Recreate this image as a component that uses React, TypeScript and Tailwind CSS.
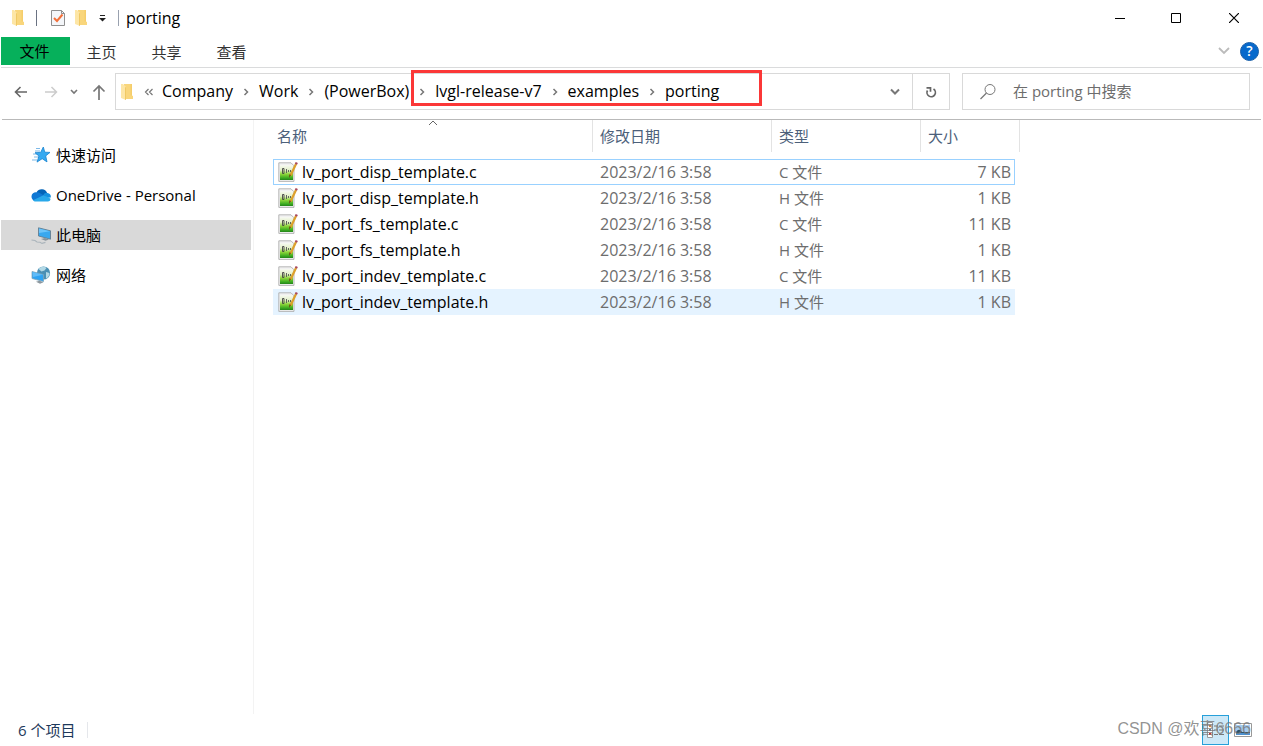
import { Fragment } from 'react';
import type { ReactNode } from 'react';
import clsx from 'clsx';

interface FileItem {
  name: string;
  date: string;
  type: string;
  size: string;
}

const files: FileItem[] = [
  { name: 'lv_port_disp_template.c', date: '2023/2/16 3:58', type: 'C 文件', size: '7 KB' },
  { name: 'lv_port_disp_template.h', date: '2023/2/16 3:58', type: 'H 文件', size: '1 KB' },
  { name: 'lv_port_fs_template.c', date: '2023/2/16 3:58', type: 'C 文件', size: '11 KB' },
  { name: 'lv_port_fs_template.h', date: '2023/2/16 3:58', type: 'H 文件', size: '1 KB' },
  { name: 'lv_port_indev_template.c', date: '2023/2/16 3:58', type: 'C 文件', size: '11 KB' },
  { name: 'lv_port_indev_template.h', date: '2023/2/16 3:58', type: 'H 文件', size: '1 KB' },
];

const FolderIcon = () => (
  <svg width="14" height="18" viewBox="0 0 14 18" className="shrink-0">
    <path d="M3 1h8v11.500l1 .5v3H3z" fill="#f9d67c" />
    <path d="M9.500 1H11v11.500H9.500z" fill="#f5cd6b" />
    <path d="M0 1h2l3 3v13l-5-2z" fill="#fde6a6" />
    <path d="M4 4l1 .5V17l-1-.5z" fill="#f0c965" />
  </svg>
);

const CheckDocIcon = () => (
  <svg width="14" height="18" viewBox="0 0 14 18" className="shrink-0">
    <path d="M.5 1.500h10l3 3v12H.5z" fill="#f4f6f9" stroke="#8f8f8f" />
    <path d="M10.500 1.500v3h3" fill="none" stroke="#8f8f8f" />
    <path d="M3 9l3 3 5.500-6.500" fill="none" stroke="#f2703a" strokeWidth="2" />
  </svg>
);

const StarIcon = () => (
  <svg width="20" height="18" viewBox="0 0 20 18">
    <path d="M4 5h5M2 8h5M3 11h5M1 14h5M5 2.500h4" stroke="#7db9e8" strokeWidth="1" />
    <path
      d="M12.300 1l1.500 5.200 5.200.2-4.300 3.500 1.300 6-4.800-3.200-5.200 3.400 2-6L4 6.700l5.700-.3z"
      fill="#36a9f0"
      stroke="#1583d0"
      strokeWidth=".8"
    />
  </svg>
);

const CloudIcon = () => (
  <svg width="20" height="14" viewBox="0 0 20 14">
    <path d="M5.500 4.300A6 6 0 0 1 16.200 5L10 9z" fill="#0364b8" />
    <path d="M4.500 13A4.300 4.300 0 0 1 5.200 4.300c1.500-.2 2.700.2 4 1l5 3L6 12z" fill="#0f78d4" />
    <path d="M12.500 6.500c1.200-1.600 2.600-1.800 4-1.400a4 4 0 0 1 3.300 4.400L14 10z" fill="#1490df" />
    <path d="M2 12.200l10-4.700c2 .5 5 1 7.500 3.300.2 1.500-1 2.700-2.700 2.700H4.500c-1 0-1.900-.4-2.500-1.300z" fill="#28a8ea" />
  </svg>
);

const ComputerIcon = () => (
  <svg width="20" height="18" viewBox="0 0 20 18">
    <path d="M7.500 1.800l12 3v8.400l-12-3.200z" fill="#39a8ef" stroke="#5f7686" strokeWidth=".8" />
    <path d="M8 2.400l11 2.800L8 7z" fill="#6cc4fa" />
    <path d="M10 13l4-1 4 1.500-3.500 1.300z" fill="#87939b" />
    <path d="M.5 14l3.500.5 2 1.500 3 .2 2 1.200 3.500-1" fill="none" stroke="#aab4bb" strokeWidth="1.100" />
  </svg>
);

const NetworkIcon = () => (
  <svg width="20" height="18" viewBox="0 0 20 18">
    <circle cx="12.500" cy="7" r="6.600" fill="#4a8fb4" />
    <path d="M7.500 3c2-2.500 6-3 8-1l-2 2.500-3 1zM15 6l3.500 1c0 3-1.500 4.500-3.500 5.500z" fill="#b3d9e6" />
    <path d="M1 5.500l11.500 3v7L1 12.500z" fill="#2ea3f2" stroke="#7da3b8" strokeWidth=".8" />
    <path d="M1.500 6l10.500 2.800L2 11z" fill="#5fbcf9" />
    <path d="M5 15.800l3.500-1 4 1.500-3.500 1.500z" fill="#8c979e" />
  </svg>
);

const FileIcon = () => (
  <svg width="20" height="20" viewBox="0 0 20 20" className="shrink-0">
    <defs>
      <linearGradient id="pad" x1="0" y1="0" x2="0" y2="1">
        <stop offset="0" stopColor="#f7f9f3" />
        <stop offset=".35" stopColor="#e2f0c6" />
        <stop offset=".6" stopColor="#8fd63c" />
        <stop offset=".85" stopColor="#3fae22" />
        <stop offset="1" stopColor="#23831a" />
      </linearGradient>
    </defs>
    <path d="M.8.800h12.200l3 3v15.600H.8z" fill="#f1f1f1" stroke="#a6a6a6" strokeWidth=".8" />
    <path d="M2 3h13v15H2z" fill="url(#pad)" />
    <path d="M4.500 6.500h1.500v5H4.500z" fill="none" stroke="#444" strokeWidth=".9" />
    <path d="M8.500 7v4M10.500 8v2M12.500 8v2" stroke="#555" strokeWidth=".9" />
    <path d="M18 2L12.500 13.500" stroke="#dda02c" strokeWidth="2.200" />
    <path d="M18.800.5l-.9 1.800" stroke="#a8495c" strokeWidth="2.400" />
    <path d="M13 13l-2 3 .3-3.800z" fill="#6b4a16" />
  </svg>
);

const CrumbArrow = () => (
  <svg width="26" height="8" viewBox="0 0 26 8" className="shrink-0">
    <path d="M11.500 1l3 3-3 3" fill="none" stroke="#777" strokeWidth="1.500" />
  </svg>
);

const Crumb = ({ children }: { children: ReactNode }) => (
  <button type="button" className="pb-0.5 text-base leading-5 whitespace-nowrap">
    {children}
  </button>
);

const TitleBar = () => (
  <header className="flex h-9 items-center justify-between pl-3">
    <div className="flex items-center">
      <FolderIcon />
      <span className="ml-2.5 h-4 w-px bg-gray-500" />
      <button type="button" aria-label="属性" className="ml-3.5">
        <CheckDocIcon />
      </button>
      <button type="button" aria-label="新建文件夹" className="ml-2.5">
        <FolderIcon />
      </button>
      <button type="button" aria-label="自定义快速访问工具栏" className="ml-2.5">
        <svg width="7" height="8" viewBox="0 0 7 8">
          <path d="M1 1.500h5" stroke="#222" />
          <path d="M0 4h7L3.500 7.500z" fill="#222" />
        </svg>
      </button>
      <span className="ml-3 h-4 w-px bg-gray-400" />
      <h1 className="ml-[7px] text-base leading-5">porting</h1>
    </div>
    <div className="flex">
      <button type="button" aria-label="最小化" className="flex w-14 justify-center">
        <svg width="10" height="10" viewBox="0 0 10 10">
          <path d="M0 5.500h10" stroke="#000" />
        </svg>
      </button>
      <button type="button" aria-label="最大化" className="flex w-14 justify-center">
        <svg width="10" height="10" viewBox="0 0 10 10">
          <path d="M.5.500h9v9h-9z" fill="none" stroke="#000" />
        </svg>
      </button>
      <button type="button" aria-label="关闭" className="flex w-[59px] justify-center">
        <svg width="10" height="10" viewBox="0 0 10 10">
          <path d="M0 0l10 10M10 0L0 10" stroke="#000" strokeWidth="1.200" />
        </svg>
      </button>
    </div>
  </header>
);

const Ribbon = () => (
  <nav className="mx-px flex items-center border-b border-[#dadbdc] pt-px pb-0.5">
    <button type="button" className="h-7 w-[69px] bg-[#06b05b] pr-0.5">
      文件
    </button>
    {['主页', '共享', '查看'].map((tab) => (
      <button key={tab} type="button" className="h-7 w-[65px] pt-0.5 pr-0.5 text-[#333]">
        {tab}
      </button>
    ))}
    <div className="ml-auto flex items-center gap-2.5 pr-[3px]">
      <button type="button" aria-label="展开功能区">
        <svg width="12" height="8" viewBox="0 0 12 8">
          <path d="M1 1l5 5 5-5" fill="none" stroke="#bbb" strokeWidth="1.800" />
        </svg>
      </button>
      <button
        type="button"
        aria-label="帮助"
        className="flex size-[19px] items-center justify-center rounded-full border border-[#1a5fa8] bg-[#0669cc] text-sm leading-none font-semibold text-white"
      >
        ?
      </button>
    </div>
  </nav>
);

const AddressBar = () => (
  <div className="mx-0.5 flex items-center border-b border-[#b9b9b9] pt-[5px] pr-[11px] pb-[9px] pl-3">
    <button type="button" aria-label="后退">
      <svg width="14" height="12" viewBox="0 0 14 12">
        <path d="M13 6H2M6.500 1L1.500 6l5 5" fill="none" stroke="#666" strokeWidth="1.600" />
      </svg>
    </button>
    <button type="button" aria-label="前进" className="ml-4">
      <svg width="14" height="12" viewBox="0 0 14 12">
        <path d="M1 6h11M7.500 1l5 5-5 5" fill="none" stroke="#ccc" strokeWidth="1.500" />
      </svg>
    </button>
    <button type="button" aria-label="最近的位置" className="ml-3">
      <svg width="8" height="6" viewBox="0 0 8 6">
        <path d="M1 1l3 3 3-3" fill="none" stroke="#777" strokeWidth="1.600" />
      </svg>
    </button>
    <button type="button" aria-label="上移" className="ml-3.5">
      <svg width="14" height="16" viewBox="0 0 14 16">
        <path d="M7 16V2M1.500 7.500L7 2l5.500 5.500" fill="none" stroke="#777" strokeWidth="1.700" />
      </svg>
    </button>
    <div className="ml-[9px] flex h-[37px] flex-1 items-center border border-[#d9d9d9] pl-[5px]">
      <FolderIcon />
      <svg width="10" height="8" viewBox="0 0 10 8" className="mr-2 ml-[9px] shrink-0">
        <path d="M4.500 1l-3 3 3 3M8.500 1l-3 3 3 3" fill="none" stroke="#777" strokeWidth="1.200" />
      </svg>
      {['Company', 'Work', '(PowerBox)'].map((crumb, i) => (
        <Fragment key={crumb}>
          {i > 0 && <CrumbArrow />}
          <Crumb>{crumb}</Crumb>
        </Fragment>
      ))}
      <div className="relative flex items-center">
        {['lvgl-release-v7', 'examples', 'porting'].map((crumb) => (
          <Fragment key={crumb}>
            <CrumbArrow />
            <Crumb>{crumb}</Crumb>
          </Fragment>
        ))}
        <span className="pointer-events-none absolute -top-[11px] -right-[43px] -bottom-[3px] left-0.5 border-3 border-[#fb3737]" />
      </div>
      <button type="button" aria-label="以前的位置" className="ml-auto px-3">
        <svg width="10" height="8" viewBox="0 0 10 8">
          <path d="M1 1.500l4 4 4-4" fill="none" stroke="#777" strokeWidth="2" />
        </svg>
      </button>
      <button
        type="button"
        aria-label="刷新"
        className="flex w-[37px] items-center justify-center self-stretch border-l border-[#d9d9d9]"
      >
        <svg width="12" height="12" viewBox="0 0 12 12">
          <path d="M2.500 4.500A4.200 4.200 0 1 0 8.500 3" fill="none" stroke="#666" strokeWidth="1.700" />
          <path d="M1.500 1.800H5.500v4" fill="none" stroke="#666" strokeWidth="1.700" />
        </svg>
      </button>
    </div>
    <label className="ml-3 flex h-[37px] w-72 items-center border border-[#d9d9d9] pl-4">
      <svg width="18" height="18" viewBox="0 0 18 18" className="shrink-0">
        <circle cx="11" cy="6.500" r="5" fill="none" stroke="#777" />
        <path d="M7.500 10L1.500 16" stroke="#777" strokeWidth="1.200" />
      </svg>
      <input
        type="text"
        aria-label="搜索"
        placeholder="在 porting 中搜索"
        className="ml-4 min-w-0 flex-1 pb-0.5 outline-none placeholder:text-[#6d6d6d]"
      />
    </label>
  </div>
);

const places = [
  { label: '快速访问', icon: <StarIcon /> },
  { label: 'OneDrive - Personal', icon: <CloudIcon /> },
  { label: '此电脑', icon: <ComputerIcon />, active: true },
  { label: '网络', icon: <NetworkIcon /> },
];

const Sidebar = () => (
  <aside className="flex w-[254px] shrink-0 flex-col gap-2.5 border-r border-[#f3f3f3] pt-5 pr-0.5 pl-px">
    {places.map((place) => (
      <a
        key={place.label}
        href="#"
        className={clsx('flex h-[30px] items-center gap-[5px] pl-[30px]', place.active && 'bg-[#d9d9d9]')}
      >
        {place.icon}
        {place.label}
      </a>
    ))}
  </aside>
);

const FileTable = () => (
  <table className="ml-[19px] w-[747px] table-fixed border-separate border-spacing-0 self-start">
    <colgroup>
      <col className="w-80" />
      <col className="w-[179px]" />
      <col className="w-[149px]" />
      <col className="w-[94px]" />
      <col className="w-[5px]" />
    </colgroup>
    <thead>
      <tr className="text-left text-[#4c607a]">
        {['名称', '修改日期', '类型', '大小'].map((title, i) => (
          <th key={title} colSpan={i === 3 ? 2 : 1} className="relative p-0 pb-[7px] font-normal">
            <div className={clsx('flex h-8 items-center border-r border-[#e3e3e3]', i === 0 ? 'pl-1' : 'pl-[7px]')}>
              {title}
            </div>
            {i === 0 && (
              <svg width="10" height="6" viewBox="0 0 10 6" className="absolute top-0 left-1/2 -translate-x-1/2">
                <path d="M1 5l4-4 4 4" fill="none" stroke="#666" />
              </svg>
            )}
          </th>
        ))}
      </tr>
    </thead>
    <tbody>
      {files.map((file, i) => {
        const first = i === 0;
        const cell = clsx(
          'h-[26px] p-0',
          first && 'border-y border-[#99d1ff]',
          i === files.length - 1 && 'bg-[#e5f3ff]',
        );
        return (
          <tr key={file.name} className="text-[#6d6d6d]">
            <td className={clsx(cell, first && 'border-l')}>
              <div
                className={clsx(
                  'flex items-center gap-1 text-base leading-5 text-black',
                  first ? 'pl-1' : 'pl-[5px]',
                )}
              >
                <FileIcon />
                {file.name}
              </div>
            </td>
            <td className={clsx(cell, 'pl-[7px] text-base leading-5')}>{file.date}</td>
            <td className={clsx(cell, 'pl-[7px]')}>{file.type}</td>
            <td className={clsx(cell, 'text-right text-base leading-5', first ? 'border-r pr-[3px]' : 'pr-1')}>
              {file.size}
            </td>
            <td className="p-0" />
          </tr>
        );
      })}
    </tbody>
  </table>
);

const StatusBar = () => (
  <footer className="relative flex h-8 items-center pr-[11px] pl-[18px]">
    <span className="text-[#1e395b]">6 个项目</span>
    <span className="ml-3 h-4 w-px bg-gray-200" />
    <div className="ml-auto flex items-center gap-[5px]">
      <button
        type="button"
        aria-label="详细信息"
        className="flex h-[30px] w-[27px] items-center justify-center border border-[#26a0da] bg-[#cce8f7]"
      >
        <svg width="18" height="17" viewBox="0 0 18 17">
          <path d="M.5.500h5v15h-5z" fill="#fff" stroke="#999" />
          <path d="M2 3h2v2H2z" fill="#d78b3a" />
          <path d="M2 7h2v2H2z" fill="#4d80b5" />
          <path d="M2 11h2v2H2z" fill="#c33" />
          <path d="M7 4h4M12 4h5M7 8h4M12 8h5M7 12.500h4M12 12.500h5" stroke="#777" />
        </svg>
      </button>
      <button type="button" aria-label="大图标">
        <svg width="18" height="14" viewBox="0 0 18 14">
          <path d="M.5.500h17v13H.5z" fill="#fff" stroke="#999" />
          <path d="M2 2h14v10H2z" fill="#a5cdf1" />
          <path d="M2 9c2-3 4-3 6 0h8v1H2z" fill="#2d5068" />
          <path d="M2 10h14v2H2z" fill="#4d91cf" />
        </svg>
      </button>
    </div>
    <span className="pointer-events-none absolute right-3 pb-0.5 font-['Liberation_Sans','Noto_Sans_CJK_SC',sans-serif] text-base leading-5 whitespace-nowrap text-[#777]/80">
      CSDN @欢喜6666
    </span>
  </footer>
);

const App = () => {
  return (
    <div className="flex min-h-screen flex-col bg-white font-['Open_Sans','Noto_Sans_CJK_SC',sans-serif] text-[15px] leading-5 text-black">
      <TitleBar />
      <Ribbon />
      <AddressBar />
      <main className="flex flex-1">
        <Sidebar />
        <FileTable />
      </main>
      <StatusBar />
    </div>
  );
};

export default App;
